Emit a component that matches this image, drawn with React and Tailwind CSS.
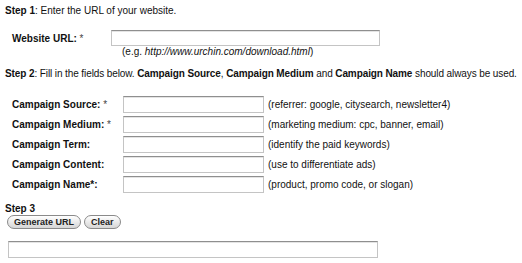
export default function App() {
  const rows = [
    ["Campaign Source:", " *", "(referrer: google, citysearch, newsletter4)"],
    ["Campaign Medium:", " *", "(marketing medium: cpc, banner, email)"],
    ["Campaign Term:", "", "(identify the paid keywords)"],
    ["Campaign Content:", "", "(use to differentiate ads)"],
    ["Campaign Name*:", "", "(product, promo code, or slogan)"],
  ];
  const inputCls =
    "block bg-white border border-[#c4c4c4] border-t-[#8f8f8f] shadow-[inset_0_1px_0_#e4e4e4]";
  const btnCls =
    "h-[14px] px-[6px] rounded-full border border-[#8a8a8a] bg-gradient-to-b from-white to-[#d6d6d6] text-[9px] leading-[12px] font-semibold text-[#222]";
  return (
    <div className="w-[522px] h-[263px] overflow-hidden bg-white text-[#111] font-['Liberation_Sans',Arial,sans-serif] text-[10px] pl-[5px] pt-[5px]">
      <p className="h-[12px] leading-[12px]">
        <b>Step 1</b>: Enter the URL of your website.
      </p>
      <div className="mt-[13px] flex items-center h-[16px]">
        <span className="pl-[7px] w-[106px] font-bold">
          Website URL:<span className="font-normal text-[#444]"> *</span>
        </span>
        <span className={inputCls + " w-[269px] h-[16px]"}></span>
      </div>
      <p className="mt-[0px] h-[12px] leading-[12px] pl-[117px]">
        (e.g. <i>http://www.urchin.com/download.html</i>)
      </p>
      <p className="mt-[10px] h-[12px] leading-[12px] whitespace-nowrap tracking-[-0.1px]">
        <b>Step 2</b>: Fill in the fields below. <b>Campaign Source</b>, <b>Campaign Medium</b> and <b>Campaign Name</b> should always be used.
      </p>
      <div className="mt-[14px] flex flex-col">
        {rows.map(([label, star, hint]) => (
          <div key={label} className="flex items-center h-[20px]">
            <span className="pl-[7px] w-[118px] font-bold">
              {label}
              {star && <span className="font-normal text-[#444]">{star}</span>}
            </span>
            <span className={inputCls + " w-[141px] h-[17px]"}></span>
            <span className="ml-[4px]">{hint}</span>
          </div>
        ))}
      </div>
      <p className="mt-[9px] h-[12px] leading-[12px] font-bold">Step 3</p>
      <div className="flex gap-[3px] pl-[2px]">
        <button className={btnCls}>Generate URL</button>
        <button className={btnCls}>Clear</button>
      </div>
      <div className={inputCls + " mt-[12px] ml-[3px] w-[370px] h-[17px]"}></div>
    </div>
  );
}
